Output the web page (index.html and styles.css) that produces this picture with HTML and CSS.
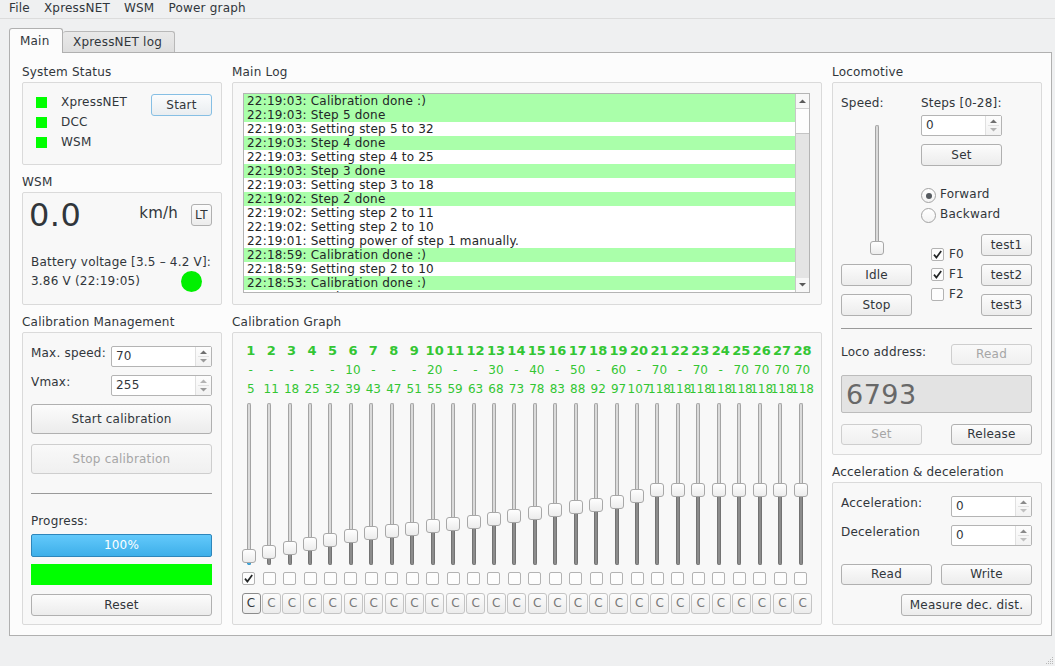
FILE: index.html
```html
<!DOCTYPE html>
<html>
<head>
<meta charset="utf-8">
<title>WSM</title>
<link rel="stylesheet" href="styles.css">
</head>
<body>
<div class="menubar">
  <span class="menu-item">File</span><span class="menu-item">XpressNET</span><span class="menu-item">WSM</span><span class="menu-item">Power graph</span>
</div>
<div class="tabs">
  <div class="tab tab-active">Main</div>
  <div class="tab tab-inactive">XpressNET log</div>
</div>
<div class="pane">
  <div class="col col-left">
    <section class="group">
      <div class="gtitle">System Status</div>
      <div class="gbox box-status">
        <div class="status-list">
          <div class="status-row"><span class="led"></span>XpressNET</div>
          <div class="status-row"><span class="led"></span>DCC</div>
          <div class="status-row"><span class="led"></span>WSM</div>
        </div>
        <button class="btn btn-default btn-start">Start</button>
      </div>
    </section>
    <section class="group">
      <div class="gtitle">WSM</div>
      <div class="gbox box-wsm">
        <div class="wsm-top">
          <span class="speed">0.0</span>
          <span class="kmh">km/h</span>
          <button class="btn btn-lt">LT</button>
        </div>
        <div class="wsm-bottom">
          <div class="wsm-row">Battery voltage [3.5 – 4.2 V]:</div>
          <div class="wsm-row"><span>3.86 V (22:19:05)</span><span class="circle"></span></div>
        </div>
      </div>
    </section>
    <section class="group">
      <div class="gtitle">Calibration Management</div>
      <div class="gbox box-cal">
        <div class="form-row">
          <span class="lbl">Max. speed:</span>
          <div class="spin w101"><span class="spin-val">70</span><span class="spin-arrows"><svg width="15" height="19" viewBox="0 0 15 19"><polygon points="4,7 7.5,3.5 11,7" fill="#6f6f6f"/><line x1="2" y1="9.5" x2="13" y2="9.5" stroke="#e2e2e2"/><polygon points="4,12 7.5,15.5 11,12" fill="#9a9a9a"/></svg></span></div>
        </div>
        <div class="form-row row-gap">
          <span class="lbl">Vmax:</span>
          <div class="spin w101"><span class="spin-val">255</span><span class="spin-arrows"><svg width="15" height="19" viewBox="0 0 15 19"><polygon points="4,7 7.5,3.5 11,7" fill="#b4b4b4"/><line x1="2" y1="9.5" x2="13" y2="9.5" stroke="#e2e2e2"/><polygon points="4,12 7.5,15.5 11,12" fill="#9a9a9a"/></svg></span></div>
        </div>
        <button class="btn btn-big btn-startcal">Start calibration</button>
        <button class="btn btn-big btn-disabled btn-stopcal">Stop calibration</button>
        <div class="hsep sep-cal"></div>
        <div class="progress-lbl">Progress:</div>
        <div class="progress">100%</div>
        <div class="greenbar"></div>
        <button class="btn btn-reset">Reset</button>
      </div>
    </section>
  </div>

  <div class="col col-mid">
    <section class="group">
      <div class="gtitle">Main Log</div>
      <div class="gbox box-log">
        <div class="log">
          <div class="log-lines">
            <div class="log-line ok">22:19:03: Calibration done :)</div>
            <div class="log-line ok">22:19:03: Step 5 done</div>
            <div class="log-line">22:19:03: Setting step 5 to 32</div>
            <div class="log-line ok">22:19:03: Step 4 done</div>
            <div class="log-line">22:19:03: Setting step 4 to 25</div>
            <div class="log-line ok">22:19:03: Step 3 done</div>
            <div class="log-line">22:19:03: Setting step 3 to 18</div>
            <div class="log-line ok">22:19:02: Step 2 done</div>
            <div class="log-line">22:19:02: Setting step 2 to 11</div>
            <div class="log-line">22:19:02: Setting step 2 to 10</div>
            <div class="log-line">22:19:01: Setting power of step 1 manually.</div>
            <div class="log-line ok">22:18:59: Calibration done :)</div>
            <div class="log-line">22:18:59: Setting step 2 to 10</div>
            <div class="log-line ok">22:18:53: Calibration done :)</div>
            <div class="log-line">22:18:53: Setting step 2 to 10</div>
          </div>
          <div class="scrollbar">
            <div class="sb-btn"><svg width="13" height="14" viewBox="0 0 13 14"><polygon points="3,9 6.5,5.5 10,9" fill="#5a5a5a"/></svg></div>
            <div class="sb-thumb"></div>
            <div class="sb-track"></div>
            <div class="sb-btn"><svg width="13" height="14" viewBox="0 0 13 14"><polygon points="3,5 6.5,8.5 10,5" fill="#5a5a5a"/></svg></div>
          </div>
        </div>
      </div>
    </section>
    <section class="group">
      <div class="gtitle">Calibration Graph</div>
      <div class="gbox box-graph">
        <div class="gcol"><div class="gnum">1</div><div class="gstep">-</div><div class="gval">5</div><div class="vslider"><div class="vtrack-up"></div><div class="vhandle"></div><div class="vtrack-down focus" style="height:2.4px"></div></div><div class="cb"><svg width="11" height="11" viewBox="0 0 11 11"><path d="M2 5.6 L4.4 8.6 L9.2 2" fill="none" stroke="#232627" stroke-width="1.7"/></svg></div><button class="btn cbtn cbtn-focus">C</button></div>
        <div class="gcol"><div class="gnum">2</div><div class="gstep">-</div><div class="gval">11</div><div class="vslider"><div class="vtrack-up"></div><div class="vhandle"></div><div class="vtrack-down" style="height:5.9px"></div></div><div class="cb"></div><button class="btn cbtn">C</button></div>
        <div class="gcol"><div class="gnum">3</div><div class="gstep">-</div><div class="gval">18</div><div class="vslider"><div class="vtrack-up"></div><div class="vhandle"></div><div class="vtrack-down" style="height:10px"></div></div><div class="cb"></div><button class="btn cbtn">C</button></div>
        <div class="gcol"><div class="gnum">4</div><div class="gstep">-</div><div class="gval">25</div><div class="vslider"><div class="vtrack-up"></div><div class="vhandle"></div><div class="vtrack-down" style="height:14.1px"></div></div><div class="cb"></div><button class="btn cbtn">C</button></div>
        <div class="gcol"><div class="gnum">5</div><div class="gstep">-</div><div class="gval">32</div><div class="vslider"><div class="vtrack-up"></div><div class="vhandle"></div><div class="vtrack-down" style="height:18.2px"></div></div><div class="cb"></div><button class="btn cbtn">C</button></div>
        <div class="gcol"><div class="gnum">6</div><div class="gstep">10</div><div class="gval">39</div><div class="vslider"><div class="vtrack-up"></div><div class="vhandle"></div><div class="vtrack-down" style="height:22.3px"></div></div><div class="cb"></div><button class="btn cbtn">C</button></div>
        <div class="gcol"><div class="gnum">7</div><div class="gstep">-</div><div class="gval">43</div><div class="vslider"><div class="vtrack-up"></div><div class="vhandle"></div><div class="vtrack-down" style="height:24.7px"></div></div><div class="cb"></div><button class="btn cbtn">C</button></div>
        <div class="gcol"><div class="gnum">8</div><div class="gstep">-</div><div class="gval">47</div><div class="vslider"><div class="vtrack-up"></div><div class="vhandle"></div><div class="vtrack-down" style="height:27px"></div></div><div class="cb"></div><button class="btn cbtn">C</button></div>
        <div class="gcol"><div class="gnum">9</div><div class="gstep">-</div><div class="gval">51</div><div class="vslider"><div class="vtrack-up"></div><div class="vhandle"></div><div class="vtrack-down" style="height:29.3px"></div></div><div class="cb"></div><button class="btn cbtn">C</button></div>
        <div class="gcol"><div class="gnum">10</div><div class="gstep">20</div><div class="gval">55</div><div class="vslider"><div class="vtrack-up"></div><div class="vhandle"></div><div class="vtrack-down" style="height:31.7px"></div></div><div class="cb"></div><button class="btn cbtn">C</button></div>
        <div class="gcol"><div class="gnum">11</div><div class="gstep">-</div><div class="gval">59</div><div class="vslider"><div class="vtrack-up"></div><div class="vhandle"></div><div class="vtrack-down" style="height:34px"></div></div><div class="cb"></div><button class="btn cbtn">C</button></div>
        <div class="gcol"><div class="gnum">12</div><div class="gstep">-</div><div class="gval">63</div><div class="vslider"><div class="vtrack-up"></div><div class="vhandle"></div><div class="vtrack-down" style="height:36.4px"></div></div><div class="cb"></div><button class="btn cbtn">C</button></div>
        <div class="gcol"><div class="gnum">13</div><div class="gstep">30</div><div class="gval">68</div><div class="vslider"><div class="vtrack-up"></div><div class="vhandle"></div><div class="vtrack-down" style="height:39.3px"></div></div><div class="cb"></div><button class="btn cbtn">C</button></div>
        <div class="gcol"><div class="gnum">14</div><div class="gstep">-</div><div class="gval">73</div><div class="vslider"><div class="vtrack-up"></div><div class="vhandle"></div><div class="vtrack-down" style="height:42.2px"></div></div><div class="cb"></div><button class="btn cbtn">C</button></div>
        <div class="gcol"><div class="gnum">15</div><div class="gstep">40</div><div class="gval">78</div><div class="vslider"><div class="vtrack-up"></div><div class="vhandle"></div><div class="vtrack-down" style="height:45.1px"></div></div><div class="cb"></div><button class="btn cbtn">C</button></div>
        <div class="gcol"><div class="gnum">16</div><div class="gstep">-</div><div class="gval">83</div><div class="vslider"><div class="vtrack-up"></div><div class="vhandle"></div><div class="vtrack-down" style="height:48.1px"></div></div><div class="cb"></div><button class="btn cbtn">C</button></div>
        <div class="gcol"><div class="gnum">17</div><div class="gstep">50</div><div class="gval">88</div><div class="vslider"><div class="vtrack-up"></div><div class="vhandle"></div><div class="vtrack-down" style="height:51px"></div></div><div class="cb"></div><button class="btn cbtn">C</button></div>
        <div class="gcol"><div class="gnum">18</div><div class="gstep">-</div><div class="gval">92</div><div class="vslider"><div class="vtrack-up"></div><div class="vhandle"></div><div class="vtrack-down" style="height:53.3px"></div></div><div class="cb"></div><button class="btn cbtn">C</button></div>
        <div class="gcol"><div class="gnum">19</div><div class="gstep">60</div><div class="gval">97</div><div class="vslider"><div class="vtrack-up"></div><div class="vhandle"></div><div class="vtrack-down" style="height:56.2px"></div></div><div class="cb"></div><button class="btn cbtn">C</button></div>
        <div class="gcol"><div class="gnum">20</div><div class="gstep">-</div><div class="gval">107</div><div class="vslider"><div class="vtrack-up"></div><div class="vhandle"></div><div class="vtrack-down" style="height:62.1px"></div></div><div class="cb"></div><button class="btn cbtn">C</button></div>
        <div class="gcol"><div class="gnum">21</div><div class="gstep">70</div><div class="gval">118</div><div class="vslider"><div class="vtrack-up"></div><div class="vhandle"></div><div class="vtrack-down" style="height:68.5px"></div></div><div class="cb"></div><button class="btn cbtn">C</button></div>
        <div class="gcol"><div class="gnum">22</div><div class="gstep">-</div><div class="gval">118</div><div class="vslider"><div class="vtrack-up"></div><div class="vhandle"></div><div class="vtrack-down" style="height:68.5px"></div></div><div class="cb"></div><button class="btn cbtn">C</button></div>
        <div class="gcol"><div class="gnum">23</div><div class="gstep">70</div><div class="gval">118</div><div class="vslider"><div class="vtrack-up"></div><div class="vhandle"></div><div class="vtrack-down" style="height:68.5px"></div></div><div class="cb"></div><button class="btn cbtn">C</button></div>
        <div class="gcol"><div class="gnum">24</div><div class="gstep">-</div><div class="gval">118</div><div class="vslider"><div class="vtrack-up"></div><div class="vhandle"></div><div class="vtrack-down" style="height:68.5px"></div></div><div class="cb"></div><button class="btn cbtn">C</button></div>
        <div class="gcol"><div class="gnum">25</div><div class="gstep">70</div><div class="gval">118</div><div class="vslider"><div class="vtrack-up"></div><div class="vhandle"></div><div class="vtrack-down" style="height:68.5px"></div></div><div class="cb"></div><button class="btn cbtn">C</button></div>
        <div class="gcol"><div class="gnum">26</div><div class="gstep">70</div><div class="gval">118</div><div class="vslider"><div class="vtrack-up"></div><div class="vhandle"></div><div class="vtrack-down" style="height:68.5px"></div></div><div class="cb"></div><button class="btn cbtn">C</button></div>
        <div class="gcol"><div class="gnum">27</div><div class="gstep">70</div><div class="gval">118</div><div class="vslider"><div class="vtrack-up"></div><div class="vhandle"></div><div class="vtrack-down" style="height:68.5px"></div></div><div class="cb"></div><button class="btn cbtn">C</button></div>
        <div class="gcol"><div class="gnum">28</div><div class="gstep">70</div><div class="gval">118</div><div class="vslider"><div class="vtrack-up"></div><div class="vhandle"></div><div class="vtrack-down" style="height:68.5px"></div></div><div class="cb"></div><button class="btn cbtn">C</button></div>
      </div>
    </section>
  </div>

  <div class="col col-right">
    <section class="group">
      <div class="gtitle">Locomotive</div>
      <div class="gbox box-loco">
        <div class="loco-top">
          <div class="loco-left">
            <div class="lbl14">Speed:</div>
            <div class="vslider loco-slider"><div class="vtrack-up"></div><div class="vhandle"></div></div>
            <button class="btn btn-idle">Idle</button>
            <button class="btn btn-stop">Stop</button>
          </div>
          <div class="loco-right">
            <div class="lbl14">Steps [0-28]:</div>
            <div class="spin w81 spin-steps"><span class="spin-val">0</span><span class="spin-arrows"><svg width="15" height="19" viewBox="0 0 15 19"><polygon points="4,7 7.5,3.5 11,7" fill="#6f6f6f"/><line x1="2" y1="9.5" x2="13" y2="9.5" stroke="#e2e2e2"/><polygon points="4,12 7.5,15.5 11,12" fill="#b4b4b4"/></svg></span></div>
            <button class="btn btn-set">Set</button>
            <div class="radio-row first"><span class="radio checked"></span><span class="rlbl">Forward</span></div>
            <div class="radio-row"><span class="radio"></span><span class="rlbl">Backward</span></div>
            <div class="funcs">
              <div class="func-list">
                <div class="func-row"><div class="cb"><svg width="11" height="11" viewBox="0 0 11 11"><path d="M2 5.6 L4.4 8.6 L9.2 2" fill="none" stroke="#232627" stroke-width="1.7"/></svg></div><span class="flbl">F0</span></div>
                <div class="func-row"><div class="cb"><svg width="11" height="11" viewBox="0 0 11 11"><path d="M2 5.6 L4.4 8.6 L9.2 2" fill="none" stroke="#232627" stroke-width="1.7"/></svg></div><span class="flbl">F1</span></div>
                <div class="func-row"><div class="cb"></div><span class="flbl">F2</span></div>
              </div>
              <div class="test-list">
                <button class="btn btn-test">test1</button>
                <button class="btn btn-test">test2</button>
                <button class="btn btn-test">test3</button>
              </div>
            </div>
          </div>
        </div>
        <div class="hsep sep-loco"></div>
        <div class="addr-row">
          <span class="lbl14 addr-lbl">Loco address:</span>
          <button class="btn btn-disabled btn-81">Read</button>
        </div>
        <div class="addr-display">6793</div>
        <div class="addr-bottom">
          <button class="btn btn-disabled btn-81">Set</button>
          <button class="btn btn-81">Release</button>
        </div>
      </div>
    </section>
    <section class="group">
      <div class="gtitle">Acceleration &amp; deceleration</div>
      <div class="gbox box-acc">
        <div class="acc-row">
          <span class="lbl14 acc-lbl">Acceleration:</span>
          <div class="spin w81"><span class="spin-val">0</span><span class="spin-arrows"><svg width="15" height="19" viewBox="0 0 15 19"><polygon points="4,7 7.5,3.5 11,7" fill="#8a8a8a"/><line x1="2" y1="9.5" x2="13" y2="9.5" stroke="#e2e2e2"/><polygon points="4,12 7.5,15.5 11,12" fill="#c0c0c0"/></svg></span></div>
        </div>
        <div class="acc-row row-gap">
          <span class="lbl14 acc-lbl">Deceleration</span>
          <div class="spin w81"><span class="spin-val">0</span><span class="spin-arrows"><svg width="15" height="19" viewBox="0 0 15 19"><polygon points="4,7 7.5,3.5 11,7" fill="#8a8a8a"/><line x1="2" y1="9.5" x2="13" y2="9.5" stroke="#e2e2e2"/><polygon points="4,12 7.5,15.5 11,12" fill="#c0c0c0"/></svg></span></div>
        </div>
        <div class="acc-buttons">
          <button class="btn btn-91">Read</button>
          <button class="btn btn-91">Write</button>
        </div>
        <button class="btn btn-measure">Measure dec. dist.</button>
      </div>
    </section>
  </div>
</div>
<div class="footer">
  <svg class="grip" width="10" height="10" viewBox="0 0 10 10"><g fill="#b8b8b8"><rect x="8" y="2" width="1" height="1"/><rect x="6" y="4" width="1" height="1"/><rect x="8" y="4" width="1" height="1"/><rect x="4" y="6" width="1" height="1"/><rect x="6" y="6" width="1" height="1"/><rect x="8" y="6" width="1" height="1"/><rect x="2" y="8" width="1" height="1"/><rect x="4" y="8" width="1" height="1"/><rect x="6" y="8" width="1" height="1"/><rect x="8" y="8" width="1" height="1"/></g></svg>
</div>
</body>
</html>
```
FILE: styles.css
```css
* { box-sizing: border-box; }
html, body { margin: 0; padding: 0; }
body {
  width: 1055px;
  height: 666px;
  overflow: hidden;
  background: #eff0f1;
  font-family: "DejaVu Sans", "Noto Sans", sans-serif;
  font-size: 12px;
  letter-spacing: 0.2px;
  color: #31363b;
  display: flex;
  flex-direction: column;
}

/* menu */
.menubar {
  height: 19px;
  border-bottom: 1px solid #dcdcdc;
  display: flex;
  padding-left: 2px;
  line-height: 17px;
  flex: none;
}
.menu-item { padding: 0 7px; }

/* tabs */
.tabs {
  display: flex;
  align-items: flex-end;
  margin: 9px 0 0 9px;
  height: 24px;
  position: relative;
  z-index: 1;
  flex: none;
}
.tab {
  border: 1px solid #b0b0b0;
  border-bottom: none;
  border-radius: 3px 3px 0 0;
  white-space: nowrap;
}
.tab-active {
  width: 54px;
  height: 25px;
  margin-bottom: -1px;
  background: #fcfcfc;
  padding: 1px 0 0 10px;
  line-height: 23px;
}
.tab-inactive {
  width: 112px;
  height: 21px;
  background: linear-gradient(#e9e9e9, #dedede);
  border-color: #b8b8b8;
  border-left: none;
  padding-left: 10px;
  line-height: 20px;
}

/* pane */
.pane {
  margin-left: 9px;
  width: 1043px;
  height: 584px;
  border: 1px solid #b0b0b0;
  background: #fcfcfc;
  padding: 12px 9px 10px 12px;
  display: flex;
  gap: 10px;
  flex: none;
}
.col { display: flex; flex-direction: column; gap: 10px; }
.col-left { width: 200px; }
.col-mid { width: 590px; }
.col-right { width: 210px; }

.gtitle {
  line-height: 14px;
  height: 14px;
  margin-bottom: 3px;
  white-space: nowrap;
}
.gbox {
  background: #f8f8f8;
  border: 1px solid #dadada;
  border-radius: 2px;
}

/* generic widgets */
.btn {
  font: inherit;
  letter-spacing: inherit;
  color: #31363b;
  background: linear-gradient(#fcfcfc, #ececec);
  border: 1px solid #b0b0b0;
  border-radius: 3px;
  padding: 0;
  margin: 0;
  line-height: 18px;
  text-align: center;
  display: block;
  white-space: nowrap;
}
.btn-default {
  border-color: #86bfe4;
  background: linear-gradient(#fbfcfd, #e9edf0);
}
.btn-disabled {
  color: #a6a6a6;
  border-color: #cecece;
  background: linear-gradient(#f9f9f9, #f0f0f0);
}
.lbl14 { line-height: 14px; white-space: nowrap; }

.spin {
  display: flex;
  background: #fff;
  border: 1px solid #b4b4b4;
  border-radius: 2px;
  height: 21px;
}
.w101 { width: 101px; }
.w81 { width: 81px; }
.spin-val { flex: 1; padding-left: 4px; line-height: 19px; }
.spin-arrows {
  width: 16px;
  border-left: 1px solid #e0e0e0;
  background: linear-gradient(#fdfdfd, #f2f2f2);
  display: flex;
}

.hsep { height: 1px; background: #9a9a9a; flex: none; }

.cb {
  width: 13px;
  height: 13px;
  border: 1px solid #b3b3b3;
  border-radius: 2px;
  background: #fdfdfd;
  display: flex;
  align-items: center;
  justify-content: center;
  flex: none;
}

.vslider {
  height: 162px;
  width: 14px;
  display: flex;
  flex-direction: column;
  align-items: center;
  flex: none;
}
.vtrack-up {
  flex: 1;
  width: 4px;
  background: linear-gradient(90deg, #cdcdcd, #e8e8e8, #cdcdcd);
  border: 1px solid #a4a4a4;
  border-bottom: none;
  border-radius: 2px 2px 0 0;
}
.vhandle {
  width: 14px;
  height: 14px;
  flex: none;
  border: 1px solid #a8a8a8;
  border-radius: 3px;
  background: linear-gradient(#fefefe, #ececec);
}
.vtrack-down {
  width: 4px;
  flex: none;
  background: #8c8c8c;
  border: 1px solid #737373;
  border-top: none;
  border-radius: 0 0 2px 2px;
}
.vtrack-down.focus { background: #3daee9; border-color: #2a8fc4; }

/* system status */
.box-status {
  height: 83px;
  padding: 9px 9px 0 13px;
  display: flex;
  justify-content: space-between;
  align-items: flex-start;
}
.status-row {
  height: 20px;
  line-height: 20px;
  display: flex;
  align-items: center;
}
.led {
  width: 11px;
  height: 11px;
  background: #00ff00;
  margin-right: 14px;
}
.btn-start { width: 61px; height: 22px; margin-top: 2px; line-height: 20px; }

/* wsm */
.box-wsm { height: 113px; padding: 6px 9px 0 8px; }
.wsm-top { display: flex; align-items: flex-start; height: 32px; }
.speed { font-size: 32px; line-height: 32px; margin-left: -2px; flex: 1; letter-spacing: 0.5px; }
.kmh { font-size: 15px; line-height: 18px; margin-top: 5px; }
.btn-lt { width: 21px; height: 22px; margin-top: 5px; margin-left: 13px; line-height: 20px; }
.wsm-bottom { margin-top: 22px; line-height: 19px; white-space: nowrap; }
.wsm-row { display: flex; justify-content: space-between; }
.circle {
  width: 21px;
  height: 21px;
  border-radius: 50%;
  background: #00f000;
  margin-top: -1px;
  margin-right: 10px;
}

/* calibration management */
.box-cal {
  height: 293px;
  padding: 13px 9px 0 8px;
  display: flex;
  flex-direction: column;
}
.form-row { display: flex; height: 21px; flex: none; }
.form-row .lbl { width: 80px; line-height: 14px; white-space: nowrap; }
.row-gap { margin-top: 8px; }
.btn-big { height: 30px; line-height: 28px; flex: none; }
.btn-startcal { margin-top: 8px; }
.btn-stopcal { margin-top: 10px; }
.sep-cal { margin-top: 19px; }
.progress-lbl { margin-top: 20px; line-height: 14px; }
.progress {
  margin-top: 6px;
  height: 23px;
  border: 1px solid #2d86bb;
  border-radius: 2px;
  background: linear-gradient(#63c9fb, #3dafe9);
  color: #fff;
  text-align: center;
  line-height: 21px;
  flex: none;
}
.greenbar { margin-top: 7px; height: 21px; background: #00ff00; flex: none; }
.btn-reset { margin-top: 9px; height: 22px; line-height: 20px; flex: none; }

/* main log */
.box-log { height: 223px; padding: 10px 0 0 10px; }
.log {
  width: 567px;
  height: 200px;
  border: 1px solid #b4b4b4;
  background: #fff;
  display: flex;
  overflow: hidden;
}
.log-lines { flex: 1; overflow: hidden; }
.log-line {
  height: 14px;
  line-height: 14px;
  padding-left: 3px;
  white-space: nowrap;
  color: #232627;
}
.log-line.ok { background: #aaffaa; }
.scrollbar {
  width: 14px;
  border-left: 1px solid #c8c8c8;
  display: flex;
  flex-direction: column;
  background: #e4e4e4;
  flex: none;
}
.sb-btn { height: 14px; background: #f7f7f7; flex: none; display: flex; }
.sb-thumb {
  height: 26px;
  background: #fdfdfd;
  border-top: 1px solid #d0d0d0;
  border-bottom: 1px solid #c4c4c4;
  flex: none;
}
.sb-track { flex: 1; background: #e4e4e4; }

/* calibration graph */
.box-graph {
  height: 293px;
  padding: 10px 0 0 5.5px;
  display: flex;
  letter-spacing: 0;
}
.gcol {
  width: 20.44px;
  flex: none;
  display: flex;
  flex-direction: column;
  align-items: center;
  color: #33c633;
}
.gnum {
  font-weight: bold;
  font-size: 13px;
  line-height: 16px;
  height: 16px;
  padding-left: 4px;
  white-space: nowrap;
}
.gstep { margin-top: 4px; line-height: 14px; height: 14px; padding-left: 4px; white-space: nowrap; }
.gval { margin-top: 5px; line-height: 14px; height: 14px; padding-left: 4px; white-space: nowrap; }
.gcol .vslider { margin-top: 7px; }
.gcol .cb { margin-top: 7px; }
.cbtn {
  margin-top: 8px;
  width: 19px;
  height: 21px;
  line-height: 19px;
  align-self: flex-start;
  margin-left: 3px;
  color: #7a7a7a;
  border-color: #c4c4c4;
  flex: none;
}
.cbtn-focus { color: #31363b; border-color: #8c8c8c; }

/* locomotive */
.box-loco {
  height: 373px;
  padding: 13px 9px 0 8px;
  display: flex;
  flex-direction: column;
}
.loco-top { display: flex; gap: 9px; flex: none; }
.loco-left { width: 71px; display: flex; flex-direction: column; }
.loco-right { width: 111px; display: flex; flex-direction: column; }
.loco-slider { height: 130px; margin-top: 15px; align-self: center; }
.btn-idle { margin-top: 9px; height: 22px; line-height: 20px; }
.btn-stop { margin-top: 8px; height: 22px; line-height: 20px; }
.spin-steps { margin-top: 5px; }
.btn-set { margin-top: 8px; width: 81px; height: 22px; line-height: 20px; }
.radio-row { height: 20px; display: flex; align-items: flex-start; }
.radio-row.first { margin-top: 21px; }
.radio {
  width: 15px;
  height: 15px;
  margin-top: 1px;
  border: 1px solid #a3a3a3;
  border-radius: 50%;
  background: linear-gradient(#ffffff, #f3f3f3);
  display: flex;
  align-items: center;
  justify-content: center;
  flex: none;
}
.radio.checked::after {
  content: "";
  width: 6px;
  height: 6px;
  border-radius: 50%;
  background: #555a5f;
}
.rlbl { margin-left: 4px; line-height: 14px; margin-top: -0.5px; }
.funcs { display: flex; margin-top: 7px; }
.func-list { margin-left: 10px; margin-top: 14px; display: flex; flex-direction: column; }
.func-row { height: 20px; display: flex; align-items: flex-start; }
.flbl { margin-left: 5px; line-height: 14px; margin-top: -1px; }
.test-list { margin-left: auto; display: flex; flex-direction: column; gap: 8px; }
.btn-test { width: 51px; height: 22px; line-height: 20px; }
.sep-loco { margin-top: 12px; }
.addr-row { margin-top: 15px; display: flex; justify-content: space-between; align-items: flex-start; flex: none; }
.addr-lbl { margin-top: 1px; }
.btn-81 { width: 81px; height: 21px; line-height: 19px; }
.addr-display {
  margin-top: 10px;
  height: 38px;
  background: #e3e3e3;
  border: 1px solid #bcbcbc;
  border-radius: 2px;
  font-size: 27px;
  line-height: 34px;
  letter-spacing: 0.5px;
  padding: 2px 0 0 4px;
  color: #686868;
  flex: none;
}
.addr-bottom { margin-top: 11px; display: flex; justify-content: space-between; flex: none; }

/* acceleration */
.box-acc {
  height: 143px;
  padding: 13px 9px 0 8px;
  display: flex;
  flex-direction: column;
}
.acc-row { display: flex; justify-content: space-between; height: 21px; flex: none; }
.acc-lbl { margin-top: 0; }
.acc-buttons { margin-top: 18px; display: flex; justify-content: space-between; flex: none; }
.btn-91 { width: 91px; height: 21px; line-height: 19px; }
.btn-measure { margin-top: 9px; width: 131px; height: 22px; line-height: 20px; align-self: flex-end; }

/* footer */
.footer { flex: 1; display: flex; justify-content: flex-end; align-items: flex-end; padding: 0 1px 1px 0; }
.grip { display: block; }
```
